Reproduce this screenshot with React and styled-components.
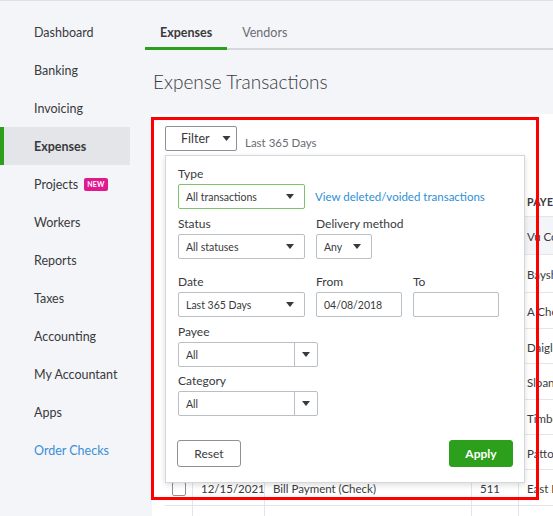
import React from 'react';
import styled, { createGlobalStyle } from 'styled-components';

const Global = createGlobalStyle`
  html, body { margin: 0; padding: 0; }
  body {
    background: #f4f5f8;
    font-family: Lato, "Open Sans", Arial, sans-serif;
    color: #393a3d;
    overflow: hidden;
  }
  * { box-sizing: border-box; }
`;

const Page = styled.div`
  position: relative;
  display: flex;
  width: 553px;
  height: 516px;
  border-top: 1px solid #dfe1e6;
  overflow: hidden;
`;

/* ---------- left navigation ---------- */
const Sidebar = styled.nav`
  width: 130px;
  flex: none;
  padding-top: 12px;
  display: flex;
  flex-direction: column;
`;

const NavItem = styled.div`
  height: 38px;
  display: flex;
  align-items: center;
  gap: 6px;
  padding-left: 34px;
  font-size: 12.5px;
  white-space: nowrap;
  color: ${p => (p.$link ? '#3b8fd6' : '#393a3d')};
  font-weight: ${p => (p.$active ? 700 : 400)};
  background: ${p => (p.$active ? '#e3e5e8' : 'transparent')};
  box-shadow: ${p => (p.$active ? 'inset 4px 0 0 #2ca01c' : 'none')};
`;

const NewBadge = styled.span`
  display: inline-flex;
  align-items: center;
  height: 13px;
  padding: 0 3px;
  border-radius: 2px;
  background: #e0198f;
  color: #fff;
  font-size: 7px;
  font-weight: 700;
  letter-spacing: 0.2px;
`;

/* ---------- main column ---------- */
const Main = styled.main`
  flex: 1;
  min-width: 0;
  padding-left: 15px;
  display: flex;
  flex-direction: column;
`;

const Tabs = styled.div`
  display: flex;
  margin-top: 15px;
  border-bottom: 2px solid #d4d7dc;
`;

const Tab = styled.div`
  position: relative;
  height: 32px;
  display: flex;
  align-items: center;
  padding: 0 15px;
  font-size: 12.5px;
  font-weight: ${p => (p.$active ? 700 : 400)};
  color: ${p => (p.$active ? '#393a3d' : '#6b6c72')};
  &::after {
    content: '';
    display: ${p => (p.$active ? 'block' : 'none')};
    position: absolute;
    left: 0;
    right: 0;
    bottom: -2px;
    height: 3px;
    background: #2ca01c;
  }
`;

const Heading = styled.h1`
  margin: 20px 0 0 8px;
  font-size: 19px;
  line-height: 24px;
  font-weight: 300;
  color: #393a3d;
`;

const Card = styled.section`
  position: relative;
  flex: 1;
  margin: 20px 0 0 7px;
  background: #fff;
  padding: 12px 0 0 13px;
  display: flex;
  flex-direction: column;
`;

const Toolbar = styled.div`
  display: flex;
  align-items: flex-end;
  gap: 8px;
`;

const FilterButton = styled.div`
  width: 72px;
  height: 25px;
  border: 1px solid #8d9096;
  border-radius: 2px;
  display: flex;
  align-items: center;
  gap: 12px;
  padding-left: 15px;
  font-size: 12.5px;
  color: #393a3d;
`;

const RangeText = styled.span`
  font-size: 11.5px;
  line-height: 16px;
  color: #6b6c72;
`;

/* ---------- transactions table ---------- */
const Table = styled.div`
  margin-top: 32px;
  display: flex;
  flex-direction: column;
  width: 600px;
`;

const Row = styled.div`
  display: grid;
  grid-template-columns: 28px 72px 207px 47px 1fr;
  border-bottom: 1px solid #e3e5e8;
  background: ${p => (p.$hover ? '#f4f5f8' : '#fff')};
  font-size: 11.5px;
  color: #393a3d;
`;

const Cell = styled.div`
  display: flex;
  align-items: center;
  justify-content: ${p => (p.$center ? 'center' : 'flex-start')};
  padding-left: ${p => (p.$center ? 0 : 8)}px;
  padding-top: 2px;
  border-right: ${p => (p.$last ? 'none' : '1px solid #e3e5e8')};
  white-space: nowrap;
  overflow: hidden;
`;

const HeadCell = styled(Cell)`
  padding-top: 4px;
  font-size: 10.5px;
  font-weight: 700;
  letter-spacing: 0.2px;
  border-right: none;
`;

const Checkbox = styled.span`
  width: 14px;
  height: 14px;
  border: 1px solid #8d9096;
  border-radius: 2px;
  background: #fff;
`;

/* ---------- filter dropdown ---------- */
const Panel = styled.div`
  position: absolute;
  left: 13px;
  top: 41px;
  width: 360px;
  height: 328px;
  background: #fff;
  border: 1px solid #d4d7dc;
  box-shadow: 0 2px 6px rgba(0, 0, 0, 0.14);
  padding: 10px 11px 16px 12px;
  display: flex;
  flex-direction: column;
  z-index: 2;
`;

const FieldRow = styled.div`
  display: flex;
  align-items: flex-end;
  gap: ${p => p.$gap ?? 11}px;
  margin-top: ${p => p.$top ?? 0}px;
`;

const Field = styled.div`
  display: flex;
  flex-direction: column;
`;

const Label = styled.label`
  font-size: 12px;
  line-height: 16px;
  margin-bottom: 2px;
  color: #393a3d;
`;

const Select = styled.div`
  width: ${p => p.$w}px;
  height: 25px;
  border: 1px solid ${p => (p.$focus ? '#7cc36a' : '#babec5')};
  border-radius: 2px;
  display: flex;
  align-items: center;
  justify-content: space-between;
  padding: 0 10px 0 7px;
  font-size: 10.5px;
  color: #393a3d;
`;

const Input = styled.div`
  width: 86px;
  height: 25px;
  border: 1px solid #babec5;
  border-radius: 2px;
  display: flex;
  align-items: center;
  padding-left: 7px;
  font-size: 10.5px;
  color: #393a3d;
`;

const Combo = styled.div`
  width: 140px;
  height: 25px;
  border: 1px solid #babec5;
  border-radius: 2px;
  display: grid;
  grid-template-columns: 1fr 23px;
  font-size: 10.5px;
  color: #393a3d;
`;

const ComboText = styled.span`
  display: flex;
  align-items: center;
  padding-left: 7px;
`;

const ComboToggle = styled.span`
  display: flex;
  align-items: center;
  justify-content: center;
  border-left: 1px solid #babec5;
`;

const Link = styled.a`
  height: 25px;
  display: flex;
  align-items: center;
  font-size: 11.5px;
  color: #2d8fd5;
  text-decoration: none;
  white-space: nowrap;
`;

const Actions = styled.div`
  display: flex;
  justify-content: space-between;
  margin-top: 24px;
  margin-left: -1px;
`;

const Button = styled.button`
  width: 64px;
  height: 27px;
  border-radius: 3px;
  font-family: inherit;
  font-size: 12px;
  font-weight: ${p => (p.$primary ? 700 : 400)};
  color: ${p => (p.$primary ? '#fff' : '#393a3d')};
  background: ${p => (p.$primary ? '#2ca01c' : '#fff')};
  border: 1px solid ${p => (p.$primary ? '#2ca01c' : '#8d9096')};
  padding: 0;
`;

const Highlight = styled.div`
  position: absolute;
  left: 151px;
  top: 116px;
  width: 388px;
  height: 383px;
  border: 3px solid #ff0000;
  pointer-events: none;
  z-index: 5;
`;

const Caret = ({ w = 8, h = 5 }) => (
  <svg width={w} height={h} viewBox="0 0 8 5" aria-hidden="true">
    <path d="M0 0h8L4 5z" fill="#393a3d" />
  </svg>
);

const navItems = [
  { label: 'Dashboard' },
  { label: 'Banking' },
  { label: 'Invoicing' },
  { label: 'Expenses', active: true },
  { label: 'Projects', badge: true },
  { label: 'Workers' },
  { label: 'Reports' },
  { label: 'Taxes' },
  { label: 'Accounting' },
  { label: 'My Accountant' },
  { label: 'Apps' },
  { label: 'Order Checks', link: true },
];

const rows = [
  { h: 38, payee: 'Vu Co', hover: true },
  { h: 38, payee: 'Baysh' },
  { h: 36, payee: 'A Che' },
  { h: 35, payee: 'Daigle' },
  { h: 36, payee: 'Sloan' },
  { h: 35, payee: 'Timbe' },
  { h: 35, payee: 'Patton' },
  { h: 36, date: '12/15/2021', type: 'Bill Payment (Check)', no: '511', payee: 'East B', box: true },
  { h: 36 },
];

export default function App() {
  return (
    <Page>
      <Global />
      <Sidebar>
        {navItems.map(item => (
          <NavItem key={item.label} $active={item.active} $link={item.link}>
            {item.label}
            {item.badge && <NewBadge>NEW</NewBadge>}
          </NavItem>
        ))}
      </Sidebar>

      <Main>
        <Tabs>
          <Tab $active>Expenses</Tab>
          <Tab>Vendors</Tab>
        </Tabs>
        <Heading>Expense Transactions</Heading>

        <Card>
          <Toolbar>
            <FilterButton>
              Filter
              <Caret w={9} h={5} />
            </FilterButton>
            <RangeText>Last 365 Days</RangeText>
          </Toolbar>

          <Table>
            <Row style={{ height: 34 }}>
              <HeadCell $center />
              <HeadCell />
              <HeadCell />
              <HeadCell />
              <HeadCell $last>PAYEE</HeadCell>
            </Row>
            {rows.map((r, i) => (
              <Row key={i} $hover={r.hover} style={{ height: r.h }}>
                <Cell $center>{r.box && <Checkbox />}</Cell>
                <Cell>{r.date}</Cell>
                <Cell>{r.type}</Cell>
                <Cell>{r.no}</Cell>
                <Cell $last>{r.payee}</Cell>
              </Row>
            ))}
          </Table>

          <Panel>
            <FieldRow $gap={10}>
              <Field>
                <Label>Type</Label>
                <Select $w={127} $focus>
                  All transactions
                  <Caret />
                </Select>
              </Field>
              <Link href="#">View deleted/voided transactions</Link>
            </FieldRow>

            <FieldRow $top={7}>
              <Field>
                <Label>Status</Label>
                <Select $w={127}>
                  All statuses
                  <Caret />
                </Select>
              </Field>
              <Field>
                <Label>Delivery method</Label>
                <Select $w={56}>
                  Any
                  <Caret />
                </Select>
              </Field>
            </FieldRow>

            <FieldRow $top={15}>
              <Field>
                <Label>Date</Label>
                <Select $w={127}>
                  Last 365 Days
                  <Caret />
                </Select>
              </Field>
              <Field>
                <Label>From</Label>
                <Input>04/08/2018</Input>
              </Field>
              <Field>
                <Label>To</Label>
                <Input />
              </Field>
            </FieldRow>

            <FieldRow $top={7}>
              <Field>
                <Label>Payee</Label>
                <Combo>
                  <ComboText>All</ComboText>
                  <ComboToggle>
                    <Caret />
                  </ComboToggle>
                </Combo>
              </Field>
            </FieldRow>

            <FieldRow $top={6}>
              <Field>
                <Label>Category</Label>
                <Combo>
                  <ComboText>All</ComboText>
                  <ComboToggle>
                    <Caret />
                  </ComboToggle>
                </Combo>
              </Field>
            </FieldRow>

            <Actions>
              <Button>Reset</Button>
              <Button $primary>Apply</Button>
            </Actions>
          </Panel>
        </Card>
      </Main>

      <Highlight />
    </Page>
  );
}
